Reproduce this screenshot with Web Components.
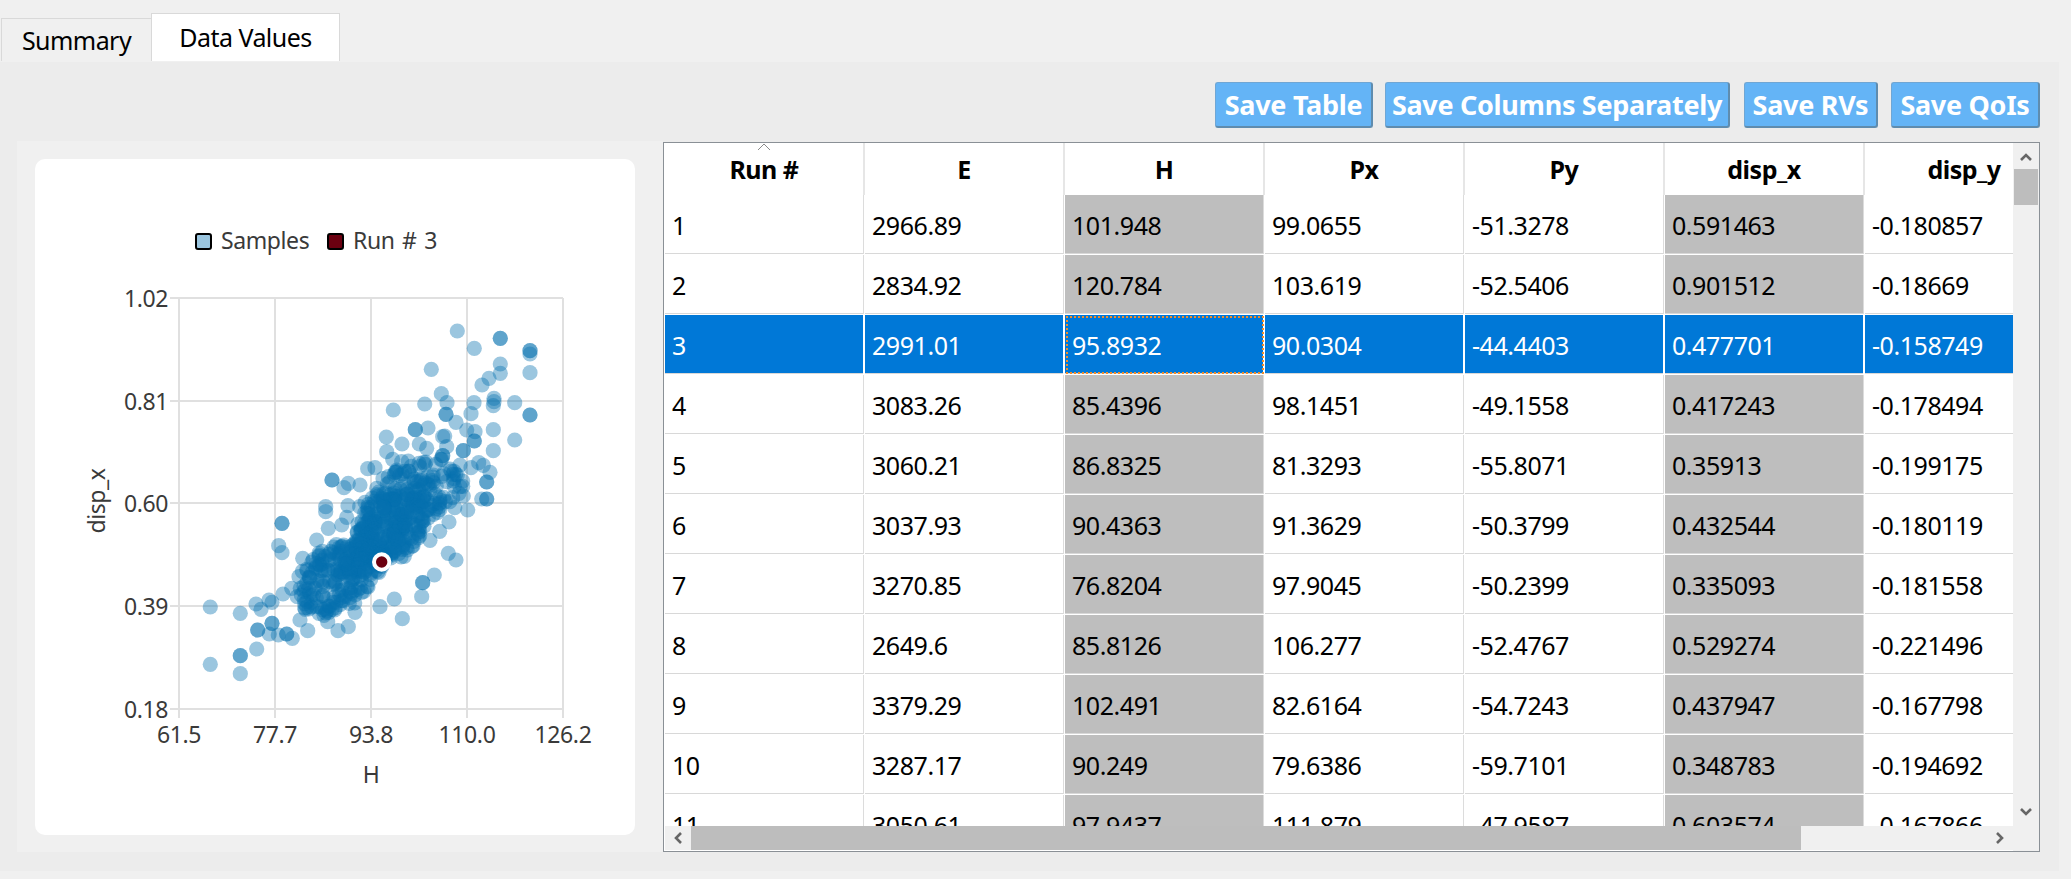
<!DOCTYPE html>
<html lang="en">
<head>
<meta charset="UTF-8">
<title>Data Values</title>
<style>
  html, body { margin: 0; height: 100%; background: #f0f0f0; overflow: hidden; }
  body { font-family: "Noto Sans", "Open Sans", sans-serif; color: #000; }
</style>
</head>
<body>
<app-shell>
  <tab-bar slot="tabs">
    <tab-item>Summary</tab-item>
    <tab-item active>Data Values</tab-item>
  </tab-bar>
  <save-button slot="actions" style="width:158px">Save Table</save-button>
  <save-button slot="actions" style="width:345px;margin-left:12px">Save Columns Separately</save-button>
  <save-button slot="actions" style="width:134px;margin-left:14px">Save RVs</save-button>
  <save-button slot="actions" style="width:149px;margin-left:13px">Save QoIs</save-button>
  <scatter-chart slot="chart"></scatter-chart>
  <data-table slot="table"></data-table>
</app-shell>

<script>
  class AppShell extends HTMLElement {
    constructor() {
      super();
      this.attachShadow({ mode: 'open' });
      this.shadowRoot.innerHTML = `
        <style>
          :host { display: block; width: 2071px; height: 879px; }
          .panel { width: 2059px; height: 809px; background: #ececec; box-sizing: border-box; padding-right: 19px; }
          .toolbar { display: flex; justify-content: flex-end; height: 79px; padding-top: 20px; box-sizing: border-box; }
          .main { display: flex; height: 711px; }
          .pane { width: 646px; margin-left: 17px; box-sizing: border-box; padding: 18px 28px 17px 18px; background: #f0f0f0; }
        </style>
        <slot name="tabs"></slot>
        <div class="panel">
          <div class="toolbar"><slot name="actions"></slot></div>
          <div class="main">
            <div class="pane"><slot name="chart"></slot></div>
            <slot name="table"></slot>
          </div>
        </div>
      `;
    }
  }
  customElements.define('app-shell', AppShell);

  class TabBar extends HTMLElement {
    constructor() {
      super();
      this.attachShadow({ mode: 'open' });
      this.shadowRoot.innerHTML = `
        <style>
          :host { display: flex; align-items: flex-end; height: 62px; padding: 0 0 1px 1px; box-sizing: border-box; }
        </style>
        <slot></slot>
      `;
    }
  }
  customElements.define('tab-bar', TabBar);

  class TabItem extends HTMLElement {
    constructor() {
      super();
      this.attachShadow({ mode: 'open' });
      this.shadowRoot.innerHTML = `
        <style>
          :host {
            display: flex; align-items: center; justify-content: center; box-sizing: border-box;
            width: 150px; height: 43px; font-size: 25px; letter-spacing: -.55px;
            border: 1px solid #d9d9d9; border-bottom: 0; border-right: 0; background: #f0f0f0; padding-bottom: 1px;
          }
          :host([active]) { width: 189px; height: 48px; background: #fff; border-right: 1px solid #d9d9d9; padding-bottom: 2px; }
        </style>
        <slot></slot>
      `;
    }
  }
  customElements.define('tab-item', TabItem);

  class SaveButton extends HTMLElement {
    constructor() {
      super();
      this.attachShadow({ mode: 'open' });
      this.shadowRoot.innerHTML = `
        <style>
          :host {
            display: flex; align-items: center; justify-content: center; box-sizing: border-box;
            height: 46px; background: #64b4f6; color: #fff; font-size: 27px; font-weight: 700; letter-spacing: -.3px;
            border: 1px solid #6fa6d4; border-right: 2px solid #5f8cae; border-bottom: 2px solid #5f8cae; border-radius: 3px;
            white-space: nowrap;
          }
        </style>
        <slot></slot>
      `;
    }
  }
  customElements.define('save-button', SaveButton);

  // points read off the plot, in zoomed crop coords (x/3+100, y/3+280)
  const OUTLIERS = [
    [1072,153],[1123,205],[1201,175],[1201,175],[1290,212],[1290,212],[1290,222],[1201,252],[1201,280],[1290,278],
    [994,268],[1167,295],[1146,315],[1024,341],[1041,368],[974,372],[1122,368],[1182,355],[1180,377],[1182,365],
    [1244,368],[880,390],[1038,403],[1038,403],[1113,401],[1290,405],[1290,405],[946,449],[946,449],[984,444],[1068,427],
    [1180,449],[1100,450],[1125,455],[859,471],[1034,468],[1028,470],[1244,480],[1123,483],[1123,483],[958,492],[906,492],
    [1180,512],[860,515],[1090,512],[1090,512],[980,505],[1028,527],[1028,527],[1040,500],[878,538],[905,545],[925,543],
    [1080,555],[1113,563],[1136,548],[1150,556],[1170,577],[803,566],[825,563],[1160,606],[1160,606],[1080,620],[1090,648],
    [1145,657],[1160,657],[1160,657],[1103,690],[696,600],[696,600],[732,623],[745,610],[780,615],[677,680],[677,695],
    [744,677],[740,712],[546,730],[546,730],[725,735],[685,745],[536,797],[546,818],[1068,840],[1045,820],[1003,885],
    [968,908],[968,908],[965,950],[883,957],[907,1016],[840,980],[331,981],[421,1000],[468,972],[483,988],[507,960],
    [516,967],[549,942],[575,925],[473,1050],[473,1050],[516,1030],[516,1030],[508,1062],[535,1065],[560,1062],[560,1062],
    [577,1075],[623,1052],[600,1020],[470,1107],[421,1127],[421,1127],[331,1153],[421,1181],[714,1052],[745,1040],
    [683,1025],[657,1000],[765,997],[608,835],[650,780]
  ];

  function cloudPoints() {
    // dense middle of the cloud: fixed seed so the picture never changes
    let seed = 20714;
    const rnd = () => (seed = (seed * 16807) % 2147483647) / 2147483647;
    const pts = [];
    const blob = (count, cx, cy, ra, rb) => {
      let n = 0;
      while (n < count) {
        const a = rnd() * 2 - 1, b = rnd() * 2 - 1;
        if (a * a + b * b > 1) continue;
        const x = cx + a * ra * .75 - b * rb * .66;
        const y = cy - a * ra * .66 - b * rb * .75;
        if (Math.hypot(x - 745, y - 760) < 26) continue;
        pts.push([Math.round(x), Math.round(y)]);
        n++;
      }
    };
    blob(170, 705, 895, 130, 95);
    blob(190, 920, 690, 200, 120);
    blob(150, 880, 725, 125, 90);
    blob(60, 800, 830, 70, 60);
    return pts;
  }

  class ScatterChart extends HTMLElement {
    constructor() {
      super();
      this.attachShadow({ mode: 'open' });
      const xs = [[179, '61.5'], [275, '77.7'], [371, '93.8'], [467, '110.0'], [563, '126.2']];
      const ys = [[298, '1.02'], [401, '0.81'], [503, '0.60'], [606, '0.39'], [709, '0.18']];
      const grid = xs.map(([x, t]) => `
          <line x1="${x}" y1="298" x2="${x}" y2="718"/>`).join('') + ys.map(([y, t]) => `
          <line x1="170" y1="${y}" x2="563" y2="${y}"/>`).join('');
      const xLabels = xs.map(([x, t]) => `<text x="${x}" y="743" text-anchor="middle">${t}</text>`).join('');
      const yLabels = ys.map(([y, t]) => `<text x="168" y="${y + 9}" text-anchor="end">${t}</text>`).join('');
      const dots = OUTLIERS.concat(cloudPoints()).map(([x, y]) =>
        `<circle cx="${(x / 3 + 100).toFixed(1)}" cy="${(y / 3 + 280).toFixed(1)}" r="7.6"/>`).join('');
      this.shadowRoot.innerHTML = `
        <style>
          :host { display: block; width: 600px; height: 676px; background: #fff; border-radius: 10px; }
          svg { display: block; }
          text { font-family: "Noto Sans", sans-serif; font-size: 23px; fill: #3a3a3a; letter-spacing: -.4px; word-spacing: 2px; }
          .grid line { stroke: #e0e0e0; stroke-width: 2; }
          .dots circle { fill: #0570b0; fill-opacity: .4; }
        </style>
        <svg width="600" height="676" viewBox="35 159 600 676">
          <rect x="196" y="234" width="15" height="15" rx="2" fill="#9bc6e0" stroke="#000" stroke-width="2"/>
          <text x="221" y="249">Samples</text>
          <rect x="328" y="234" width="15" height="15" rx="2" fill="#6b0010" stroke="#000" stroke-width="2"/>
          <text x="353" y="249">Run # 3</text>
          <g class="grid">${grid}</g>
          <g class="dots">${dots}</g>
          <circle cx="381.7" cy="562" r="7.7" fill="#6b0010" stroke="#fff" stroke-width="4"/>
          ${xLabels}${yLabels}
          <text x="371" y="783" text-anchor="middle">H</text>
          <text transform="translate(105 501) rotate(-90)" text-anchor="middle">disp_x</text>
        </svg>
      `;
    }
  }
  customElements.define('scatter-chart', ScatterChart);

  class TableScrollbar extends HTMLElement {
    constructor() {
      super();
      this.attachShadow({ mode: 'open' });
      const vertical = this.hasAttribute('vertical');
      const chevron = d => `<svg width="26" height="25" viewBox="0 0 26 25"><path d="${d}" fill="none" stroke="#666" stroke-width="2.6"/></svg>`;
      this.shadowRoot.innerHTML = vertical ? `
        <style>
          :host { display: flex; flex-direction: column; background: #f0f0f0; height: 100%; }
          svg { display: block; flex: none; }
          .thumb { height: 36px; width: 24px; background: #bdbdbd; margin: 1px 0 0 1px; }
          .rest { flex: 1; }
        </style>
        ${chevron('M8 17 L13 12 L18 17')}
        <div class="thumb"></div><div class="rest"></div>
        ${chevron('M8 8 L13 13 L18 8')}
      ` : `
        <style>
          :host { display: flex; background: #f0f0f0; height: 24px; }
          svg { display: block; flex: none; }
          .thumb { width: 1110px; height: 24px; background: #bdbdbd; margin-left: 0; }
          .rest { flex: 1; }
        </style>
        ${chevron('M16 7 L11 12 L16 17')}
        <div class="thumb"></div><div class="rest"></div>
        ${chevron('M10 7 L15 12 L10 17')}
      `;
    }
  }
  customElements.define('table-scrollbar', TableScrollbar);

  const COLUMNS = ['Run #', 'E', 'H', 'Px', 'Py', 'disp_x', 'disp_y'];
  const ROWS = [
    ['1', '2966.89', '101.948', '99.0655', '-51.3278', '0.591463', '-0.180857'],
    ['2', '2834.92', '120.784', '103.619', '-52.5406', '0.901512', '-0.18669'],
    ['3', '2991.01', '95.8932', '90.0304', '-44.4403', '0.477701', '-0.158749'],
    ['4', '3083.26', '85.4396', '98.1451', '-49.1558', '0.417243', '-0.178494'],
    ['5', '3060.21', '86.8325', '81.3293', '-55.8071', '0.35913', '-0.199175'],
    ['6', '3037.93', '90.4363', '91.3629', '-50.3799', '0.432544', '-0.180119'],
    ['7', '3270.85', '76.8204', '97.9045', '-50.2399', '0.335093', '-0.181558'],
    ['8', '2649.6', '85.8126', '106.277', '-52.4767', '0.529274', '-0.221496'],
    ['9', '3379.29', '102.491', '82.6164', '-54.7243', '0.437947', '-0.167798'],
    ['10', '3287.17', '90.249', '79.6386', '-59.7101', '0.348783', '-0.194692'],
    ['11', '3050.61', '97.9437', '111.879', '-47.9587', '0.603574', '-0.167866']
  ];
  const GREY_COLUMNS = [2, 5];
  const SELECTED_ROW = 2;

  class DataTable extends HTMLElement {
    constructor() {
      super();
      this.attachShadow({ mode: 'open' });
      const head = COLUMNS.map((c, i) => `<div class="th">${c}${i === 0 ? '<svg class="sort" width="14" height="8" viewBox="0 0 14 8"><path d="M1 7 L7 1 L13 7" fill="none" stroke="#8a8a8a" stroke-width="1"/></svg>' : ''}</div>`).join('');
      const body = ROWS.map((row, r) => row.map((v, c) => {
        let cls = 'td';
        if (r === SELECTED_ROW) cls += ' sel';
        else if (GREY_COLUMNS.includes(c)) cls += ' grey';
        if (r === SELECTED_ROW && c === 2) cls += ' focus';
        return `<div class="${cls}">${v}</div>`;
      }).join('')).join('');
      this.shadowRoot.innerHTML = `
        <style>
          :host {
            display: grid; grid-template-columns: 1fr 26px; grid-template-rows: 1fr 25px;
            width: 1377px; height: 710px; margin-top: 1px; box-sizing: border-box;
            border: 1px solid #8a9096; background: #fff; padding-left: 1px; font-size: 25px; letter-spacing: -.45px;
          }
          .view { overflow: hidden; }
          .grid { display: grid; grid-template-columns: repeat(7, 200px); grid-template-rows: 52px; grid-auto-rows: 60px; }
          .th {
            position: relative; display: flex; align-items: center; justify-content: center;
            font-weight: 700; box-sizing: border-box; border-right: 2px solid #e6e6e6; letter-spacing: -.5px;
          }
          .sort { position: absolute; left: 92px; top: 0; }
          .td {
            display: flex; align-items: center; box-sizing: border-box; padding-left: 7px; white-space: nowrap;
            border-right: 1px solid #fff; border-bottom: 1px solid #fff;
            box-shadow: inset -1px 0 #dcdcdc, inset 0 -1px #d8d8d8;
          }
          .grey { background: #bebebe; }
          .sel { background: #0078d7; color: #fff; box-shadow: inset -1px 0 #fff, inset 0 -1px #d8d8d8; }
          .focus { outline: 2px dotted #f28c28; outline-offset: -3px; }
          .corner { background: #f0f0f0; }
        </style>
        <div class="view"><div class="grid">${head}${body}</div></div>
        <table-scrollbar vertical></table-scrollbar>
        <table-scrollbar></table-scrollbar>
        <div class="corner"></div>
      `;
    }
  }
  customElements.define('data-table', DataTable);
</script>
</body>
</html>
